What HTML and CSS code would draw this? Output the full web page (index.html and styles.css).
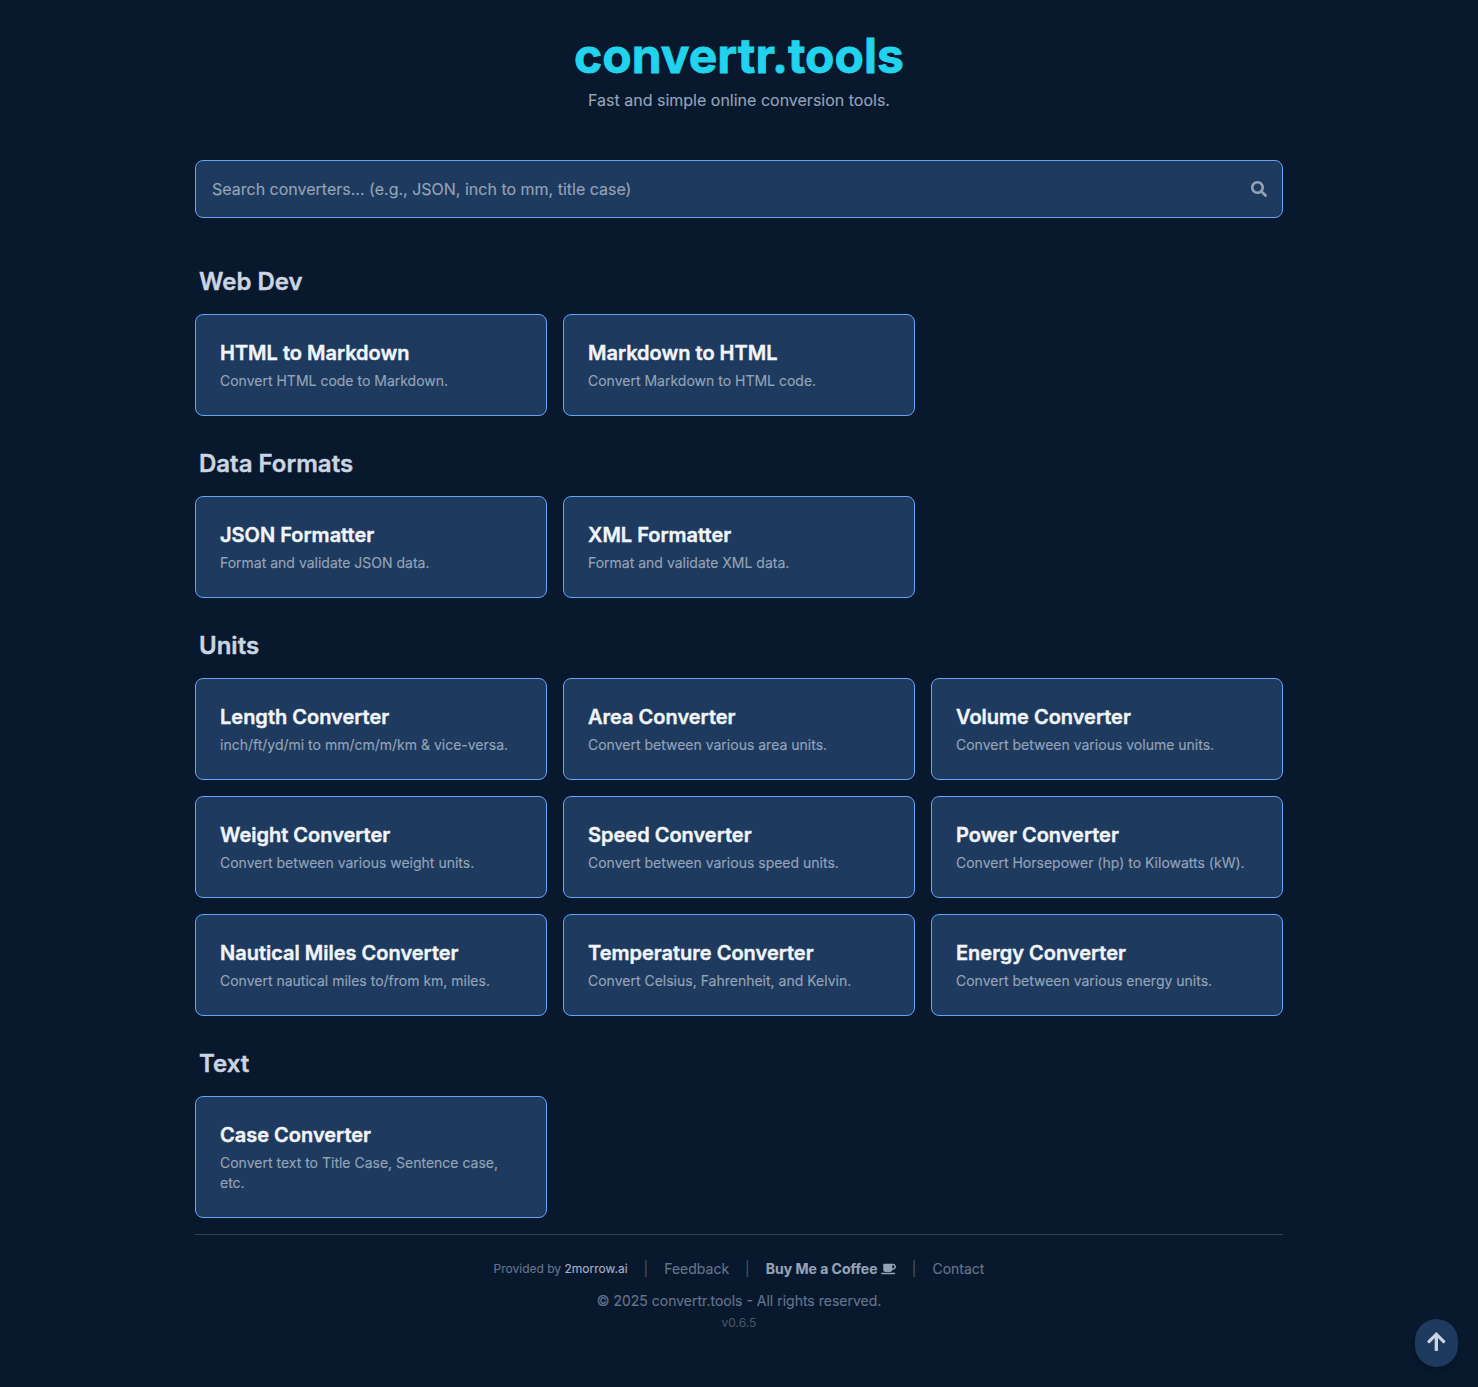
FILE: index.html
```html
<!DOCTYPE html>
<html lang="en">
<head>
<meta charset="utf-8">
<title>convertr.tools</title>
<link rel="stylesheet" href="styles.css">
</head>
<body>
<div class="container">
  <header class="site-header">
    <h1 class="site-title">convertr.tools</h1>
    <p class="tagline">Fast and simple online conversion tools.</p>
  </header>
  <div class="search">
    <span class="search-text">Search converters... (e.g., JSON, inch to mm, title case)</span>
    <svg class="search-icon" viewBox="0 0 512 512"><path d="M505 442.700L405.300 343c-4.500-4.500-10.600-7-17-7H372c27.600-35.300 44-79.700 44-128C416 93.100 322.900 0 208 0S0 93.100 0 208s93.100 208 208 208c48.300 0 92.700-16.400 128-44v16.300c0 6.400 2.500 12.500 7 17l99.700 99.700c9.400 9.400 24.600 9.400 33.900 0l28.300-28.300c9.400-9.400 9.400-24.600.1-34zM208 336c-70.700 0-128-57.200-128-128 0-70.700 57.200-128 128-128 70.700 0 128 57.200 128 128 0 70.700-57.200 128-128 128z"/></svg>
  </div>
  <main>
    <section class="category">
      <h2>Web Dev</h2>
      <div class="grid">
        <a class="card"><h3>HTML to Markdown</h3><p>Convert HTML code to Markdown.</p></a>
        <a class="card"><h3>Markdown to HTML</h3><p>Convert Markdown to HTML code.</p></a>
      </div>
    </section>
    <section class="category">
      <h2>Data Formats</h2>
      <div class="grid">
        <a class="card"><h3>JSON Formatter</h3><p>Format and validate JSON data.</p></a>
        <a class="card"><h3>XML Formatter</h3><p>Format and validate XML data.</p></a>
      </div>
    </section>
    <section class="category">
      <h2>Units</h2>
      <div class="grid">
        <a class="card"><h3>Length Converter</h3><p>inch/ft/yd/mi to mm/cm/m/km &amp; vice-versa.</p></a>
        <a class="card"><h3>Area Converter</h3><p>Convert between various area units.</p></a>
        <a class="card"><h3>Volume Converter</h3><p>Convert between various volume units.</p></a>
        <a class="card"><h3>Weight Converter</h3><p>Convert between various weight units.</p></a>
        <a class="card"><h3>Speed Converter</h3><p>Convert between various speed units.</p></a>
        <a class="card"><h3>Power Converter</h3><p>Convert Horsepower (hp) to Kilowatts (kW).</p></a>
        <a class="card"><h3>Nautical Miles Converter</h3><p>Convert nautical miles to/from km, miles.</p></a>
        <a class="card"><h3>Temperature Converter</h3><p>Convert Celsius, Fahrenheit, and Kelvin.</p></a>
        <a class="card"><h3>Energy Converter</h3><p>Convert between various energy units.</p></a>
      </div>
    </section>
    <section class="category">
      <h2>Text</h2>
      <div class="grid">
        <a class="card"><h3>Case Converter</h3><p>Convert text to Title Case, Sentence case, etc.</p></a>
      </div>
    </section>
  </main>
  <footer class="site-footer">
    <div class="links">
      <span class="provided">Provided by <a class="provider">2morrow.ai</a></span>
      <span class="sep">|</span>
      <a>Feedback</a>
      <span class="sep">|</span>
      <a class="coffee">Buy Me a Coffee <svg class="coffee-icon" viewBox="0 0 640 512"><path d="M192 384h192c53 0 96-43 96-96h32c70.600 0 128-57.400 128-128S582.600 32 512 32H120c-13.300 0-24 10.700-24 24v232c0 53 43 96 96 96zM512 96c35.300 0 64 28.700 64 64s-28.700 64-64 64h-32V96h32zm47.700 384H48.300c-47.600 0-61-64-36-64h583.300c25 0 11.800 64-35.900 64z"/></svg></a>
      <span class="sep">|</span>
      <a>Contact</a>
    </div>
    <p class="copyright">© 2025 convertr.tools - All rights reserved.</p>
    <p class="version">v0.6.5</p>
  </footer>
</div>
<button class="to-top" aria-label="Back to top"><svg viewBox="0 0 448 512"><path d="M34.900 289.500l-22.200-22.200c-9.400-9.400-9.400-24.600 0-33.900L207 39c9.400-9.400 24.600-9.400 33.900 0l194.300 194.300c9.400 9.400 9.400 24.600 0 33.900L413 289.400c-9.500 9.500-25 9.300-34.300-.4L264 168.600V456c0 13.300-10.700 24-24 24h-32c-13.300 0-24-10.700-24-24V168.600L69.200 289.100c-9.300 9.800-24.800 10-34.300.4z"/></svg></button>
</body>
</html>
```

FILE: styles.css
```css
* { box-sizing: border-box; }
body {
  margin: 0;
  min-height: 100vh;
  background: #08182d;
  color: #cbd5e1;
  font-family: Inter, "Liberation Sans", sans-serif;
  font-size: 16px;
  line-height: 24px;
}
h1, h2, h3, p { margin: 0; }
.container { width: 1088px; margin: 0 auto; padding-top: 32px; }
.site-header { text-align: center; margin-bottom: 48px; }
.site-title {
  font-size: 48px;
  line-height: 48px;
  font-weight: 700;
  color: #22d3ee;
  margin-bottom: 8px;
  -webkit-text-stroke: 0.8px currentColor;
}
.tagline { color: #94a3b8; }
.search {
  display: flex;
  align-items: center;
  justify-content: space-between;
  height: 58px;
  padding: 0 15px 0 16px;
  border: 1px solid #60a5fa;
  border-radius: 8px;
  background: #1e3a5f;
  color: #94a3b8;
  margin-bottom: 48px;
}
.search-icon { width: 16px; height: 16px; fill: #94a3b8; }
.tagline, .search-text, .card p { -webkit-text-stroke: 0.15px currentColor; }
.category { margin-bottom: 32px; }
.category:last-child { margin-bottom: 16px; }
.category h2 { font-size: 24px; line-height: 32px; font-weight: 600; padding-left: 4px; margin-bottom: 16px; }
.grid { display: grid; grid-template-columns: repeat(3, 1fr); gap: 16px; }
.card {
  padding: 24px;
  border: 1px solid #60a5fa;
  border-radius: 8px;
  background: #1e3a5f;
}
.card h3 { font-size: 20px; line-height: 28px; font-weight: 600; color: #f1f5f9; }
.card p { font-size: 14px; line-height: 20px; color: #94a3b8; margin-top: 4px; }
.category h2, .card h3 { -webkit-text-stroke: 0.4px currentColor; }
.site-footer {
  border-top: 1px solid #334155;
  padding-top: 24px;
  text-align: center;
  font-size: 14px;
  line-height: 20px;
  color: #64748b;
  -webkit-text-stroke: 0.15px currentColor;
}
.links { display: flex; justify-content: center; align-items: center; gap: 16px; margin-bottom: 12px; }
.provided { font-size: 12px; }
.provider { color: #a3b1c6; }
.sep { color: #475569; }
.coffee { color: #94a3b8; font-weight: 700; }
.coffee-icon { width: 15px; height: 12px; fill: currentColor; vertical-align: -1px; }
.version { font-size: 12px; line-height: 16px; color: #475569; margin-top: 4px; }
.to-top {
  position: fixed;
  right: 20px;
  bottom: 20px;
  width: 42.67px;
  height: 48px;
  display: flex;
  align-items: center;
  justify-content: center;
  padding: 0 0 2px;
  border: 0;
  border-radius: 9999px;
  background: #1e3a5f;
  box-shadow: 0 4px 6px -1px rgba(0, 0, 0, 0.1), 0 2px 4px -2px rgba(0, 0, 0, 0.1);
}
.to-top svg { width: 18.67px; height: 21.33px; fill: #cbd5e1; }
```
